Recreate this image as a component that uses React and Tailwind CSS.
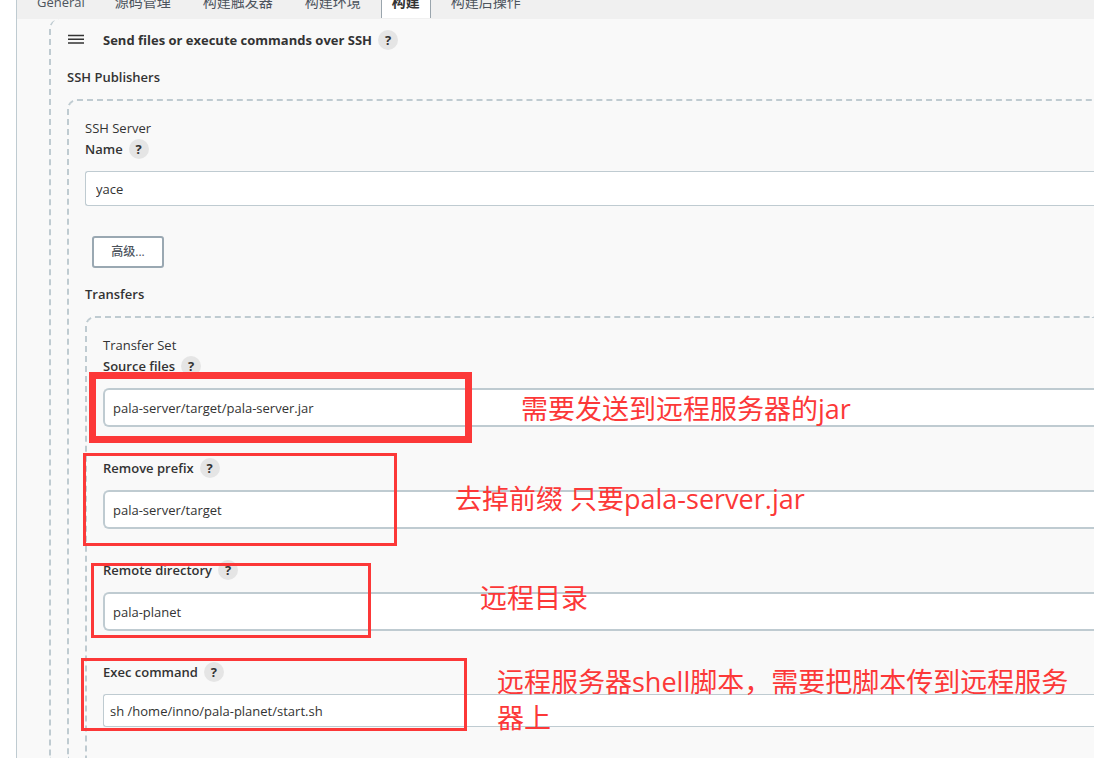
import React, { useState } from 'react';

const tabs = ['General', '源码管理', '构建触发器', '构建环境', '构建', '构建后操作'];

const initialFields = [
  { id: 'source-files', label: 'Source files', value: 'pala-server/target/pala-server.jar' },
  { id: 'remove-prefix', label: 'Remove prefix', value: 'pala-server/target' },
  { id: 'remote-directory', label: 'Remote directory', value: 'pala-planet' },
];

const HelpButton = ({ topic }) => (
  <button
    type="button"
    aria-label={`Help for ${topic}`}
    className="flex h-5 w-5 shrink-0 items-center justify-center rounded-full bg-[#e5e5e5] text-[13px] leading-5 font-bold text-[#333]"
  >
    ?
  </button>
);

const FieldLabel = ({ htmlFor, children }) => (
  <div className="flex h-5 items-center gap-[6px]">
    <label htmlFor={htmlFor} className="font-semibold">{children}</label>
    <HelpButton topic={children} />
  </div>
);

const DashedBox = ({ className = '', children }) => (
  <div className={`flex flex-1 flex-col rounded-tl-[10px] border-l-2 border-dashed border-[#bfcbd1] pl-4 ${className}`}>
    {children}
  </div>
);

const Tabs = () => {
  const [active, setActive] = useState('构建');

  return (
    <nav className="flex h-[19px] items-end overflow-hidden bg-[#f0f0f0] pl-1">
      {tabs.map((tab) => (
        <button
          key={tab}
          type="button"
          onClick={() => setActive(tab)}
          className={`mb-px flex h-10 shrink-0 items-end pb-[6px] text-sm leading-5 first:pr-[14px] first:text-[13px] ${
            tab === active
              ? 'mx-1 border-x border-[#9aa5ad] bg-white px-[10px] font-bold text-[#333]'
              : 'px-4 text-[#4d545d]'
          }`}
        >
          {tab}
        </button>
      ))}
    </nav>
  );
};

// Red marker frames and notes drawn over the form
const Annotations = () => (
  <div className="pointer-events-none absolute inset-0 text-[27px] leading-9 text-[#fc3838]">
    <div className="absolute top-[372px] left-[89px] h-[71px] w-[383px] border-7 border-[#fc3838]" />
    <div className="absolute top-[453px] left-[83px] h-[93px] w-[314px] border-3 border-[#fc3838]" />
    <div className="absolute top-[563px] left-[91px] h-[75px] w-[280px] border-3 border-[#fc3838]" />
    <div className="absolute top-[658px] left-[81px] h-[73px] w-[386px] border-3 border-[#fc3838]" />
    <p className="absolute top-[391px] left-[521px] whitespace-nowrap">需要发送到远程服务器的jar</p>
    <p className="absolute top-[481px] left-[455px] whitespace-nowrap">去掉前缀 只要pala-server.jar</p>
    <p className="absolute top-[580px] left-[480px] whitespace-nowrap">远程目录</p>
    <p className="absolute top-[664px] left-[497px] w-[580px]">远程服务器shell脚本，需要把脚本传到远程服务器上</p>
  </div>
);

const App = () => {
  const [server, setServer] = useState('yace');
  const [fields, setFields] = useState(initialFields);
  const [command, setCommand] = useState('sh /home/inno/pala-planet/start.sh');

  const updateField = (id, value) => {
    setFields(fields.map((field) => (field.id === id ? { ...field, value } : field)));
  };

  return (
    <div className="relative flex min-h-screen overflow-hidden bg-white pl-4 font-['Open_Sans','Noto_Sans_CJK_SC',sans-serif] text-[13px] leading-5 text-[#333]">
      <main className="flex min-w-0 flex-1 flex-col border-l border-[#bfcbd1] bg-[#f9f9f9]">
        <Tabs />

        <div className="flex flex-1 flex-col pl-8">
          <DashedBox>
            <div className="flex h-[42px] items-center">
              <button type="button" aria-label="Drag to reorder" className="ml-px w-[35px]">
                <svg className="h-4 w-4" viewBox="0 0 16 16" stroke="#333" strokeWidth="1.5">
                  <path d="M0 3.5h16M0 7.3h16M0 11.1h16" />
                </svg>
              </button>
              <h2 className="mr-[6px] font-bold">Send files or execute commands over SSH</h2>
              <HelpButton topic="Send files or execute commands over SSH" />
            </div>
            <h3 className="mb-[6px] h-8 leading-8 font-semibold">SSH Publishers</h3>

            <DashedBox className="border-t-2 pt-4">
              <p className="leading-[22px]">SSH Server</p>
              <FieldLabel htmlFor="server-name">Name</FieldLabel>
              <select
                id="server-name"
                value={server}
                onChange={(e) => setServer(e.target.value)}
                className="mt-3 h-[35px] w-full appearance-none rounded-l-[3px] border border-r-0 border-[#bfcbd1] bg-white px-[10px]"
              >
                <option value="yace">yace</option>
              </select>
              <button
                type="button"
                className="mt-[30px] ml-[7px] h-8 w-[72px] rounded-[3px] border-2 border-[#9aa8b2] bg-white text-xs font-medium text-[#4d545d]"
              >
                高级...
              </button>

              <h3 className="mt-4 mb-3 font-semibold">Transfers</h3>
              <DashedBox className="border-t-2 pt-4 pb-8">
                <p className="leading-[22px]">Transfer Set</p>
                {fields.map((field) => (
                  <div key={field.id} className="mb-[31px]">
                    <FieldLabel htmlFor={field.id}>{field.label}</FieldLabel>
                    <input
                      id={field.id}
                      type="text"
                      value={field.value}
                      onChange={(e) => updateField(field.id, e.target.value)}
                      className="mt-3 block h-[39px] w-full rounded-l-md border-2 border-r-0 border-[#bfcbd1] bg-white px-2"
                    />
                  </div>
                ))}
                <FieldLabel htmlFor="exec-command">Exec command</FieldLabel>
                <textarea
                  id="exec-command"
                  rows={1}
                  value={command}
                  onChange={(e) => setCommand(e.target.value)}
                  className="mt-3 block h-[33px] w-full resize-none overflow-hidden rounded-l-[3px] border border-r-0 border-[#bfcbd1] bg-white px-[6px] py-[6px]"
                />
              </DashedBox>
            </DashedBox>
          </DashedBox>
        </div>
      </main>

      <Annotations />
    </div>
  );
};

export default App;
